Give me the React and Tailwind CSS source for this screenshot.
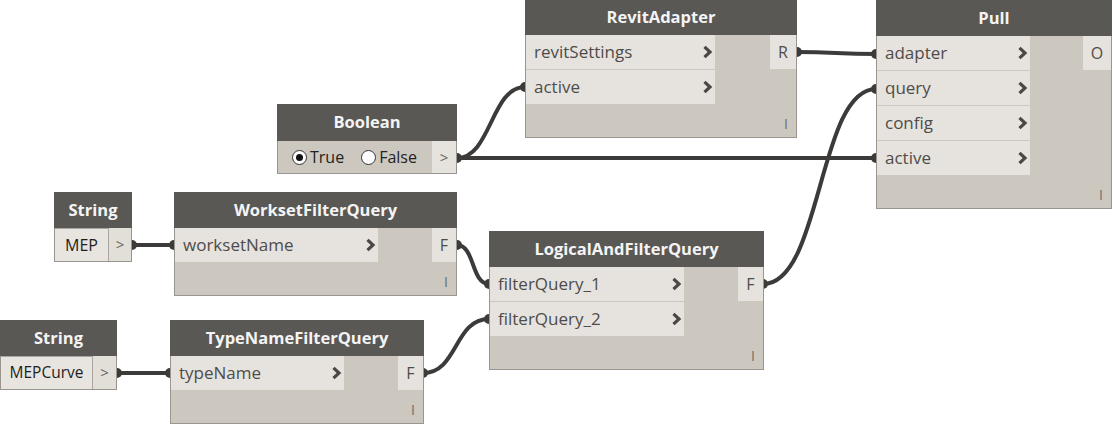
import React from "react";

function Chevron() {
  return (
    <svg width="11" height="14" viewBox="0 0 11 14" className="shrink-0">
      <polyline points="2.5,1.8 8,7 2.5,12.2" fill="none" stroke="#4a4744" strokeWidth="3.2" />
    </svg>
  );
}

function Node({ pos, title, inputs, inW, output, outW }) {
  return (
    <div className={`absolute ${pos}`}>
      <div className="h-[36px] bg-[#5a5855] flex items-center justify-center text-[16.5px] font-bold text-[#f4f4f4] whitespace-nowrap">
        {title}
      </div>
      <div className="bg-[#ccc8c0] border border-t-0 border-[#9a968f]">
        <div className="flex">
          <div className={`${inW} flex flex-col gap-px`}>
            {inputs.map((l) => (
              <div
                key={l}
                className="h-[34px] bg-[#e6e3de] flex items-center justify-between pl-2 pr-[2px] text-[17px] text-[#4e4c4a] whitespace-nowrap"
              >
                <span>{l}</span>
                <Chevron />
              </div>
            ))}
          </div>
          <div className="flex-1 flex justify-end items-start">
            <div
              className={`${outW} h-[34px] bg-[#e6e3de] flex items-center justify-center text-[16px] text-[#4e4c4a]`}
            >
              {output}
            </div>
          </div>
        </div>
        <div className="h-[33px] flex items-end justify-end pr-[8px] pb-[6px] text-[14px] text-[#6e6c69] leading-none">
          I
        </div>
      </div>
    </div>
  );
}

function StringNode({ pos, value, boxW, size }) {
  return (
    <div className={`absolute ${pos}`}>
      <div className="h-[36px] bg-[#5a5855] flex items-center justify-center text-[16.5px] font-bold text-[#f4f4f4]">
        String
      </div>
      <div className="h-[34px] border border-t-0 border-[#9a968f] bg-[#e2dfd9] flex">
        <div
          className={`${boxW} ${size} bg-[#e8e5e0] border-r border-t border-[#aaa69f] flex items-center justify-center text-[#1e1e1e]`}
        >
          {value}
        </div>
        <div className="flex-1 flex items-center justify-center text-[15px] text-[#666]">&gt;</div>
      </div>
    </div>
  );
}

function Radio({ checked }) {
  return (
    <div className="w-[15px] h-[15px] rounded-full border border-[#333] bg-white flex items-center justify-center">
      {checked && <div className="w-[7px] h-[7px] rounded-full bg-[#111]" />}
    </div>
  );
}

export default function App() {
  const wires = [
    "M457,158 C491,158 491,87 525,87",
    "M457,158 L876,158",
    "M797,52 C836,52 836,54 876,54",
    "M132,245 L174,245",
    "M457,245 C475,245 471,284 489,284",
    "M117,373 L170,373",
    "M423,373 C458,373 454,319 489,319",
    "M763,284 C822,284 818,89 876,89",
  ];
  const ports = [
    [457, 158],
    [525, 87],
    [876, 158],
    [797, 52],
    [876, 54],
    [132, 245],
    [174, 245],
    [457, 245],
    [489, 284],
    [117, 373],
    [170, 373],
    [423, 373],
    [489, 319],
    [763, 284],
    [876, 89],
  ];
  return (
    <div className="relative w-[1113px] h-[424px] bg-white overflow-hidden font-['Open_Sans',sans-serif]">
      <svg className="absolute left-0 top-0" width="1113" height="424">
        {wires.map((d, i) => (
          <path key={i} d={d} fill="none" stroke="#3c3b3a" strokeWidth="4" />
        ))}
        {ports.map(([x, y], i) => (
          <circle key={i} cx={x} cy={y} r="5" fill="#3c3b3a" />
        ))}
      </svg>

      <Node
        pos="left-[525px] top-[-1px] w-[272px]"
        title="RevitAdapter"
        inputs={["revitSettings", "active"]}
        inW="w-[189px]"
        output="R"
        outW="w-[26px]"
      />
      <Node
        pos="left-[876px] top-[0px] w-[236px]"
        title="Pull"
        inputs={["adapter", "query", "config", "active"]}
        inW="w-[153px]"
        output="O"
        outW="w-[28px]"
      />
      <Node
        pos="left-[174px] top-[192px] w-[283px]"
        title="WorksetFilterQuery"
        inputs={["worksetName"]}
        inW="w-[203px]"
        output="F"
        outW="w-[24px]"
      />
      <Node
        pos="left-[489px] top-[231px] w-[275px]"
        title="LogicalAndFilterQuery"
        inputs={["filterQuery_1", "filterQuery_2"]}
        inW="w-[194px]"
        output="F"
        outW="w-[25px]"
      />
      <Node
        pos="left-[170px] top-[320px] w-[254px]"
        title="TypeNameFilterQuery"
        inputs={["typeName"]}
        inW="w-[173px]"
        output="F"
        outW="w-[25px]"
      />

      <StringNode pos="left-[54px] top-[192px] w-[78px]" value="MEP" boxW="w-[54px]" size="text-[16px]" />
      <StringNode pos="left-[0px] top-[320px] w-[117px]" value="MEPCurve" boxW="w-[92px]" size="text-[15.5px]" />

      <div className="absolute left-[277px] top-[104px] w-[180px]">
        <div className="h-[37px] bg-[#5a5855] flex items-center justify-center text-[16.5px] font-bold text-[#f4f4f4]">
          Boolean
        </div>
        <div className="h-[33px] border border-t-0 border-[#9a968f] bg-[#ccc8c0] flex">
          <div className="flex-1 flex items-center pl-[14px] text-[16px] text-[#222]">
            <Radio checked />
            <span className="ml-[3px]">True</span>
            <div className="ml-[17px]">
              <Radio />
            </div>
            <span className="ml-[3px]">False</span>
          </div>
          <div className="w-[24px] bg-[#e6e3de] flex items-center justify-center text-[15px] text-[#666]">&gt;</div>
        </div>
      </div>
    </div>
  );
}
